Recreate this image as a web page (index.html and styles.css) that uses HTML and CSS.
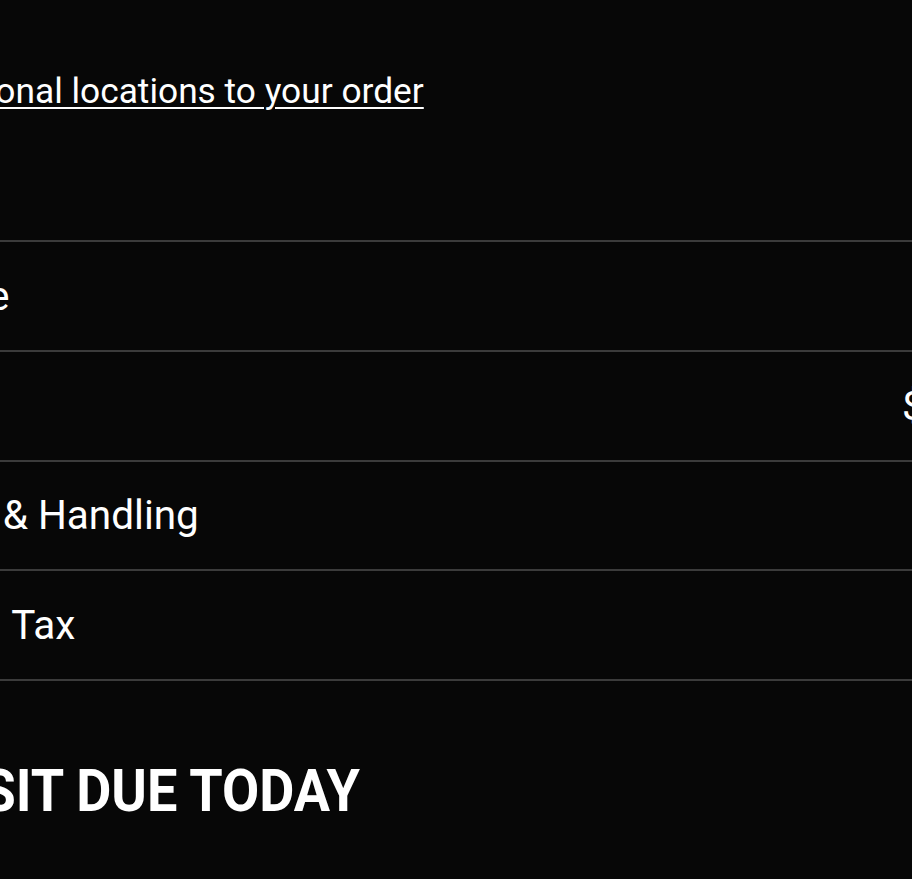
FILE: index.html
```html
<!DOCTYPE html>
<html lang="en">
<head>
  <meta charset="UTF-8" />
  <meta name="viewport" content="width=device-width, initial-scale=1.0"/>
  <title>Order Summary</title>
  <link rel="stylesheet" href="styles.css">
</head>
<body>
  <div class="summary">
    <a href="#" class="add-link">Add additional locations to your order</a>

    <div class="rows">
      <div class="row">
        <span class="label">Unit Price</span>
        <span class="value">$45.00</span>
      </div>
      <div class="row">
        <span class="label">Subtotal</span>
        <span class="value">$2,450.00</span>
      </div>
      <div class="row">
        <span class="label">Shipping &amp; Handling</span>
        <span class="value">$0.00</span>
      </div>
      <div class="row">
        <span class="label">Expected Tax</span>
        <span class="value">$0.00</span>
      </div>
    </div>

    <div class="deposit">
      <h2 class="deposit-title">DEPOSIT DUE TODAY</h2>
    </div>
  </div>
</body>
</html>
```

FILE: styles.css
```css
body {
  margin: 0;
  padding: 0;
  background: #070707;
  color: #fff;
  font-family: Roboto, "Noto Sans", sans-serif;
  overflow: hidden;
}
.summary {
  margin-left: -164px;
  width: 1244px;
}
.add-link {
  display: inline-block;
  margin-top: 71px;
  margin-bottom: 129px;
  font-size: 35.3px;
  line-height: 40px;
  color: #fff;
  text-decoration: underline;
  text-underline-offset: 4px;
  text-decoration-thickness: 2px;
}
.row {
  display: flex;
  justify-content: space-between;
  align-items: center;
  height: 107.75px;
  border-top: 2px solid #3b3b3b;
  font-size: 40.5px;
}
.row:last-child {
  border-bottom: 2px solid #3b3b3b;
}
.deposit {
  margin-top: 80px;
  margin-left: 9px;
}
.deposit-title {
  display: inline-block;
  margin: 0;
  font-size: 60px;
  line-height: 60px;
  font-weight: 700;
  transform: scaleX(0.9);
  transform-origin: left center;
}
```
